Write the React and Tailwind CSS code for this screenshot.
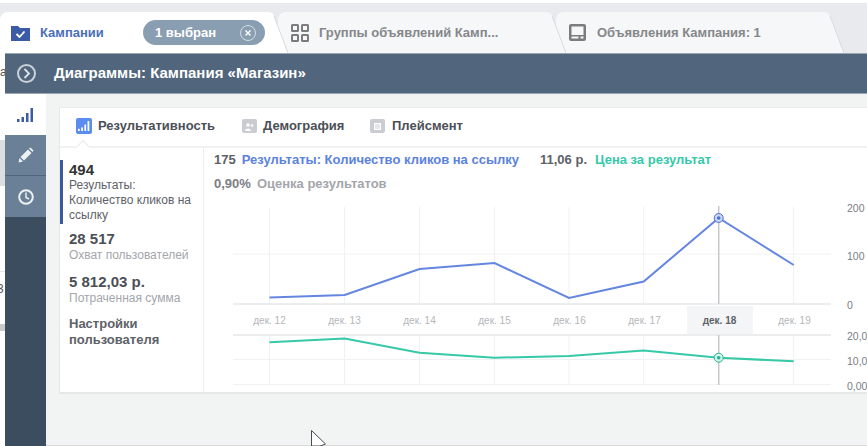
import React from 'react';

const days = ['дек. 12', 'дек. 13', 'дек. 14', 'дек. 15', 'дек. 16', 'дек. 17', 'дек. 18', 'дек. 19'];
const gridX = [269.5, 344.5, 419.5, 494.5, 569, 643.7, 718.7, 793.7];
const blueLine = '269.5,297.5 344.7,295 419.5,269 494.5,263 569,298 643.7,281.5 718.7,218 793.7,265';
const greenLine = '269.5,342.3 344.7,338.5 419.5,352.7 494.5,357.7 569,356 643.7,350.5 718.7,357.7 793.7,361.3';

const TabEnd = ({ fill }) => (
    <svg width="20" height="41" viewBox="0 0 20 41" className="shrink-0">
        <path d="M0 0 C3 0 5 1 6 4 L20 41 L0 41 Z" fill={fill} />
        <path d="M6 4 L20 41" stroke="#d8dadf" fill="none" />
    </svg>
);

const Tab = ({ children, width, active, className }) => (
    <div className={`flex h-[41px] ${className}`}>
        <div
            className={`flex items-center rounded-tl-lg h-full ${active ? 'bg-white' : 'bg-[#f6f7f9]'}`}
            style={{ width }}
        >
            {children}
        </div>
        <TabEnd fill={active ? '#ffffff' : '#f6f7f9'} />
    </div>
);

const FolderCheck = () => (
    <svg width="19" height="16" viewBox="0 0 19 16">
        <path d="M0 1 H7 L9 3 H19 V16 H0 Z" fill="#3b5ba5" />
        <path d="M5.5 9 L8.5 12 L13.5 6.5" stroke="#fff" strokeWidth="1.8" fill="none" />
    </svg>
);

const GridIcon = () => (
    <svg width="18" height="18" viewBox="0 0 18 18" fill="none" stroke="#7c7c7c" strokeWidth="2">
        <rect x="1" y="1" width="6" height="6" rx="0.5" />
        <rect x="11" y="1" width="6" height="6" rx="0.5" />
        <rect x="1" y="11" width="6" height="6" rx="0.5" />
        <rect x="11" y="11" width="6" height="6" rx="0.5" />
    </svg>
);

const AdIcon = () => (
    <svg width="17" height="17" viewBox="0 0 17 17">
        <rect x="0" y="0" width="17" height="17" rx="2" fill="#7c7c7c" />
        <rect x="2.5" y="2.5" width="12" height="8.5" fill="#f6f7f9" />
        <rect x="2.5" y="12.5" width="7" height="2" fill="#f6f7f9" />
        <rect x="11.5" y="12.5" width="3" height="2" fill="#f6f7f9" />
    </svg>
);

const Bars = ({ color }) => (
    <svg width="17" height="14" viewBox="0 0 17 14" fill={color}>
        <rect x="0" y="11" width="2.5" height="3" />
        <rect x="4.5" y="9" width="2.5" height="5" />
        <rect x="9" y="5" width="2.5" height="9" />
        <rect x="13.5" y="0" width="2.5" height="14" />
    </svg>
);

const Grid = ({ top, mid, bottom, bottomHeavy }) => (
    <g>
        {gridX.map((x) => (
            <line key={x} x1={x} x2={x} y1={top} y2={bottom} stroke="#f0f1f3" />
        ))}
        <line x1="233" x2="831" y1={mid} y2={mid} stroke="#f0f1f3" />
        <line x1="233" x2="831" y1={bottom} y2={bottom} stroke={bottomHeavy ? '#e6e7ea' : '#f0f1f3'} strokeWidth={bottomHeavy ? 1.5 : 1} />
    </g>
);

const Dot = ({ cy, color, soft }) => (
    <g>
        <circle cx="718.7" cy={cy} r="4.5" fill={soft} stroke={color} />
        <circle cx="718.7" cy={cy} r="1.8" fill={color} />
    </g>
);

const App = () => {
    return (
        <div className="relative w-[867px] h-[446px] overflow-hidden bg-white flex flex-col text-[12px] font-['Liberation_Sans',Arial,sans-serif]">
            {/* Tabs */}
            <div className="mt-[3px] h-[50px] pt-[9px] bg-[#e9eaed] flex shrink-0 text-[13px]">
                <Tab width={268} active className="relative z-20">
                    <div className="ml-[11px]"><FolderCheck /></div>
                    <span className="ml-[10px] w-[64px] shrink-0 font-bold text-[#4a6fb8]">Кампании</span>
                    <div className="ml-[39px] w-[122px] shrink-0 h-[25px] rounded-full bg-[#8a9eb1] flex items-center justify-between pl-[12px] pr-[9px] text-white font-bold">
                        <span>1 выбран</span>
                        <span className="w-[16px] h-[16px] rounded-full border border-[#d5dde4] flex items-center justify-center">
                            <svg width="8" height="8" viewBox="0 0 8 8" stroke="#fff" strokeWidth="1.5">
                                <path d="M1.5 1.5 L6.5 6.5 M6.5 1.5 L1.5 6.5" />
                            </svg>
                        </span>
                    </div>
                </Tab>
                <Tab width={268} className="relative z-10 -ml-[10px]">
                    <div className="ml-[13px]"><GridIcon /></div>
                    <span className="ml-[10px] font-bold text-[#85878a]">Группы объявлений Камп...</span>
                </Tab>
                <Tab width={268} className="-ml-[10px]">
                    <div className="ml-[13px]"><AdIcon /></div>
                    <span className="ml-[11px] font-bold text-[#85878a]">Объявления Кампания: 1</span>
                </Tab>
            </div>

            <div className="flex flex-1 min-h-0">
                {/* Page showing behind the panel */}
                <div className="w-[5px] shrink-0 overflow-hidden flex flex-col text-[#555]">
                    <span className="mt-[13px] leading-[12px]">а</span>
                    <div className="mt-[62px] h-[46px] bg-[#dcdee1]" />
                    <div className="mt-[85px] border-t border-[#e6e7ea]" />
                    <span className="mt-[11px] leading-[12px] -ml-[3px]">3</span>
                    <div className="mt-[29px] h-[7px] bg-[#c9cacc]" />
                </div>

                {/* Panel */}
                <div className="flex-1 flex flex-col min-w-0">
                    <div className="h-[41px] shrink-0 bg-[#51667c] border-t border-b border-[#9aa6b2] flex items-center">
                        <div className="ml-[12px] w-[19px] h-[19px] rounded-full border-2 border-[#c9d1d9] flex items-center justify-center">
                            <svg width="8" height="11" viewBox="0 0 8 11" fill="none" stroke="#dfe4e9" strokeWidth="1.8">
                                <path d="M1.5 1 L6 5.5 L1.5 10" />
                            </svg>
                        </div>
                        <span className="ml-[18px] text-[15px] font-bold text-white">Диаграммы: Кампания «Магазин»</span>
                    </div>

                    <div className="flex flex-1 min-h-0">
                        {/* Sidebar */}
                        <div className="w-[41px] shrink-0 bg-[#3b4d5e] flex flex-col">
                            <div className="h-[41px] bg-white flex items-center justify-center">
                                <Bars color="#3b5ba5" />
                            </div>
                            <div className="h-[41px] bg-[#6a8097] border-b border-[#51667c] flex items-center justify-center">
                                <svg width="16" height="16" viewBox="0 0 16 16" fill="#eef1f4">
                                    <path d="M0.5 15.5 L1.5 11 L5 14.5 Z" />
                                    <path d="M2.5 10 L10 2.5 L13.5 6 L6 13.5 Z" />
                                    <path d="M11 1.5 L12.5 0.5 L15.5 3.5 L14.5 5 Z" />
                                </svg>
                            </div>
                            <div className="h-[41px] bg-[#6a8097] flex items-center justify-center">
                                <svg width="16" height="16" viewBox="0 0 16 16" fill="none" stroke="#eef1f4" strokeWidth="2">
                                    <circle cx="8" cy="8" r="6.8" />
                                    <path d="M8 3.5 V8.5 L11 10" strokeWidth="1.5" />
                                </svg>
                            </div>
                        </div>

                        {/* Body */}
                        <div className="flex-1 min-w-0 bg-[#f2f3f3] border-b border-[#d9dadc] pl-[13px] pt-[13px]">
                            <div className="h-[287px] bg-white border-t border-l border-b-2 border-[#e6e7e9] border-t-[#eceded] overflow-hidden flex flex-col">
                                <div className="relative h-[40px] shrink-0 border-b-2 border-[#f0f1f2] flex items-center pb-[2px] text-[13px] font-bold text-[#4b4f56]">
                                    <div className="ml-[16px] w-[16px] h-[16px] rounded-[2px] bg-[#5b8def] flex items-center justify-center">
                                        <svg width="12" height="10" viewBox="0 0 17 14" fill="#fff">
                                            <rect x="0" y="11" width="2.5" height="3" />
                                            <rect x="4.5" y="9" width="2.5" height="5" />
                                            <rect x="9" y="5" width="2.5" height="9" />
                                            <rect x="13.5" y="0" width="2.5" height="14" />
                                        </svg>
                                    </div>
                                    <span className="ml-[6px] w-[144px]">Результативность</span>
                                    <div className="w-[15px] h-[14px] rounded-[2px] bg-[#c9ccd1] flex items-center justify-center">
                                        <svg width="9" height="9" viewBox="0 0 9 9" fill="#fff">
                                            <circle cx="3" cy="3" r="1.8" />
                                            <path d="M0 9 C0 5.5 6 5.5 6 9 Z" />
                                            <circle cx="7" cy="3.5" r="1.2" />
                                        </svg>
                                    </div>
                                    <span className="ml-[6px] w-[107px]">Демография</span>
                                    <div className="w-[15px] h-[14px] rounded-[2px] bg-[#c9ccd1] flex items-center justify-center">
                                        <div className="w-[7px] h-[7px] border border-white bg-[#e4e6e9]" />
                                    </div>
                                    <span className="ml-[7px]">Плейсмент</span>
                                    <div className="absolute left-[18px] -bottom-[6px] w-[10px] h-[10px] rotate-45 bg-white border-t border-l border-[#e9eaec]" />
                                </div>

                                <div className="flex flex-1 min-h-0">
                                    {/* Metrics */}
                                    <div className="relative w-[144px] shrink-0 border-r border-[#eceded] pl-[9px] pt-[13px]">
                                        <div className="absolute -left-px top-[12px] h-[64px] w-[4px] bg-[#3b5998]" />
                                        <p className="text-[15px] leading-[17px] font-bold text-[#333]">494</p>
                                        <p className="leading-[15px] text-[#5d6168]">Результаты:<br />Количество кликов на<br />ссылку</p>
                                        <p className="mt-[7px] text-[15px] leading-[18px] font-bold text-[#4b4f56]">28 517</p>
                                        <p className="leading-[15px] text-[#a3a6ab]">Охват пользователей</p>
                                        <p className="mt-[10px] text-[15px] leading-[18px] font-bold text-[#4b4f56]">5 812,03 р.</p>
                                        <p className="leading-[15px] text-[#a3a6ab]">Потраченная сумма</p>
                                        <p className="mt-[10px] text-[13px] leading-[16px] font-bold text-[#5d6168]">Настройки<br />пользователя</p>
                                    </div>

                                    {/* Chart */}
                                    <div className="flex-1 min-w-0 flex flex-col">
                                        <div className="h-[52px] shrink-0 pl-[10px] pt-[4px] text-[13px] font-bold leading-[16px]">
                                            <div className="flex">
                                                <span className="text-[#5d6168]">175</span>
                                                <span className="ml-[6px] text-[#5b82dc]">Результаты: Количество кликов на ссылку</span>
                                                <span className="ml-[21px] text-[#5d6168]">11,06 р.</span>
                                                <span className="ml-[8px] text-[#35c9a8]">Цена за результат</span>
                                            </div>
                                            <div className="flex mt-[8px]">
                                                <span className="text-[#7b7e84]">0,90%</span>
                                                <span className="ml-[6px] text-[#a3a6ab]">Оценка результатов</span>
                                            </div>
                                        </div>
                                        <div className="flex">
                                            <div className="w-[643px] shrink-0 flex flex-col">
                                                <svg width="643" height="106" viewBox="204 200 643 106" className="block">
                                                    <Grid top={207} mid={254} bottom={304} bottomHeavy />
                                                    <line x1="718.7" x2="718.7" y1="206" y2="304" stroke="#c5c8cc" strokeWidth="1.5" />
                                                    <polyline points={blueLine} fill="none" stroke="#6486e0" strokeWidth="2" />
                                                    <Dot cy={218} color="#4a6fd0" soft="#c9d6f5" />
                                                </svg>
                                                <div className="h-[28px] pl-[28px] flex text-[10px] text-[#b4b6ba]">
                                                    {days.map((d) => (
                                                        <div key={d} className="w-[75px] shrink-0 flex justify-center">
                                                            {d === 'дек. 18' ? (
                                                                <span className="w-[66px] h-full bg-[#f4f5f7] flex items-center justify-center font-bold text-[#5d6168]">{d}</span>
                                                            ) : (
                                                                <span className="flex items-center">{d}</span>
                                                            )}
                                                        </div>
                                                    ))}
                                                </div>
                                                <svg width="643" height="59" viewBox="204 334 643 59" className="block">
                                                    <line x1="233" x2="831" y1="335" y2="335" stroke="#e6e7ea" strokeWidth="1.5" />
                                                    <Grid top={335} mid={359.5} bottom={384.5} />
                                                    <line x1="718.7" x2="718.7" y1="335" y2="385" stroke="#c5c8cc" strokeWidth="1.5" />
                                                    <polyline points={greenLine} fill="none" stroke="#35c9a8" strokeWidth="2" />
                                                    <Dot cy={357.7} color="#26b594" soft="#d3f3ec" />
                                                </svg>
                                            </div>
                                            <div className="flex-1 min-w-0 overflow-hidden flex flex-col text-[10.5px] leading-[12px] text-[#7b7e84] whitespace-nowrap">
                                                <span className="mt-[2px]">200</span>
                                                <span className="mt-[36px]">100</span>
                                                <span className="mt-[37px]">0</span>
                                                <span className="mt-[19px]">20,00</span>
                                                <span className="mt-[13px]">10,00</span>
                                                <span className="mt-[13px]">0,00</span>
                                            </div>
                                        </div>
                                    </div>
                                </div>
                            </div>
                        </div>
                    </div>
                </div>
            </div>

            {/* Mouse cursor */}
            <svg className="absolute left-[311px] top-[430px]" width="16" height="17" viewBox="0 0 16 17">
                <path d="M0.5 0.5 V16 H4 L9 16 L14.5 14 Z" fill="#fff" stroke="#4a4a55" />
            </svg>
        </div>
    );
};

export default App;
